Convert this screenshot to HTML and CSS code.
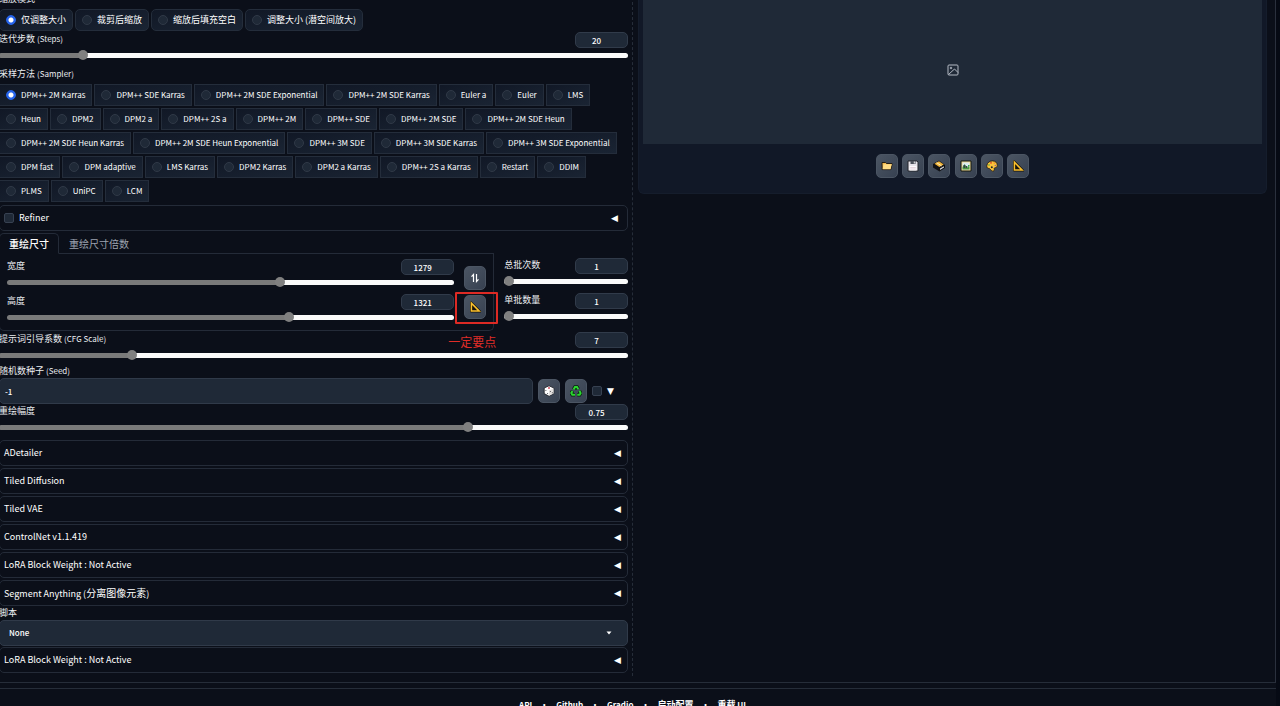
FILE: index.html
```html
<!DOCTYPE html>
<html lang="zh-CN">
<head>
<meta charset="utf-8">
<meta name="viewport" content="width=device-width, initial-scale=1">
<title>Stable Diffusion</title>
<link rel="stylesheet" href="styles.css">
</head>
<body>
<div class="app">
<main class="columns">
  <section class="settings">
    <fieldset class="group">
      <legend class="label">缩放模式</legend>
      <div class="chips rounded">
        <label class="chip"><input type="radio" name="resize" checked>仅调整大小</label>
        <label class="chip"><input type="radio" name="resize">裁剪后缩放</label>
        <label class="chip"><input type="radio" name="resize">缩放后填充空白</label>
        <label class="chip"><input type="radio" name="resize">调整大小 (潜空间放大)</label>
      </div>
    </fieldset>

    <div class="slider steps">
      <div class="slider-head"><label class="label" for="steps">迭代步数 <span class="latin">(Steps)</span></label><input class="number" type="number" value="20" aria-label="Steps"></div>
      <input class="range" id="steps" type="range" min="1" max="150" value="20" style="--fill:13%">
    </div>

    <fieldset class="group sampler">
      <legend class="label">采样方法 <span class="latin">(Sampler)</span></legend>
      <div class="chips">
        <label class="chip"><input type="radio" name="sampler" checked>DPM++ 2M Karras</label>
        <label class="chip"><input type="radio" name="sampler">DPM++ SDE Karras</label>
        <label class="chip"><input type="radio" name="sampler">DPM++ 2M SDE Exponential</label>
        <label class="chip"><input type="radio" name="sampler">DPM++ 2M SDE Karras</label>
        <label class="chip"><input type="radio" name="sampler">Euler a</label>
        <label class="chip"><input type="radio" name="sampler">Euler</label>
        <label class="chip"><input type="radio" name="sampler">LMS</label>
        <label class="chip"><input type="radio" name="sampler">Heun</label>
        <label class="chip"><input type="radio" name="sampler">DPM2</label>
        <label class="chip"><input type="radio" name="sampler">DPM2 a</label>
        <label class="chip"><input type="radio" name="sampler">DPM++ 2S a</label>
        <label class="chip"><input type="radio" name="sampler">DPM++ 2M</label>
        <label class="chip"><input type="radio" name="sampler">DPM++ SDE</label>
        <label class="chip"><input type="radio" name="sampler">DPM++ 2M SDE</label>
        <label class="chip"><input type="radio" name="sampler">DPM++ 2M SDE Heun</label>
        <label class="chip"><input type="radio" name="sampler">DPM++ 2M SDE Heun Karras</label>
        <label class="chip"><input type="radio" name="sampler">DPM++ 2M SDE Heun Exponential</label>
        <label class="chip"><input type="radio" name="sampler">DPM++ 3M SDE</label>
        <label class="chip"><input type="radio" name="sampler">DPM++ 3M SDE Karras</label>
        <label class="chip"><input type="radio" name="sampler">DPM++ 3M SDE Exponential</label>
        <label class="chip"><input type="radio" name="sampler">DPM fast</label>
        <label class="chip"><input type="radio" name="sampler">DPM adaptive</label>
        <label class="chip"><input type="radio" name="sampler">LMS Karras</label>
        <label class="chip"><input type="radio" name="sampler">DPM2 Karras</label>
        <label class="chip"><input type="radio" name="sampler">DPM2 a Karras</label>
        <label class="chip"><input type="radio" name="sampler">DPM++ 2S a Karras</label>
        <label class="chip"><input type="radio" name="sampler">Restart</label>
        <label class="chip"><input type="radio" name="sampler">DDIM</label>
        <label class="chip"><input type="radio" name="sampler">PLMS</label>
        <label class="chip"><input type="radio" name="sampler">UniPC</label>
        <label class="chip"><input type="radio" name="sampler">LCM</label>
      </div>
    </fieldset>

    <div class="accordion refiner">
      <label class="check-label"><input class="check" type="checkbox">Refiner</label>
      <span class="arrow">◀</span>
    </div>

    <div class="size-row">
      <div class="size">
        <div class="tabs" role="tablist">
          <button class="tab active" role="tab" aria-selected="true">重绘尺寸</button>
          <button class="tab" role="tab" aria-selected="false">重绘尺寸倍数</button>
        </div>
        <div class="size-box">
          <div class="sliders">
            <div class="slider">
              <div class="slider-head"><label class="label" for="width">宽度</label><input class="number" type="number" value="1279" aria-label="宽度"></div>
              <input class="range" id="width" type="range" min="64" max="2048" value="1279" style="--fill:61%">
            </div>
            <div class="slider">
              <div class="slider-head"><label class="label" for="height">高度</label><input class="number" type="number" value="1321" aria-label="高度"></div>
              <input class="range" id="height" type="range" min="64" max="2048" value="1321" style="--fill:63%">
            </div>
          </div>
          <div class="size-tools">
            <button class="tool" aria-label="交换宽高">
              <svg width="10" height="10" viewBox="0 0 10 10" fill="none" stroke="#fff" stroke-width="1.2"><path d="M3.500 9V1.500M1.500 3.700l2-2.200V5M6.500 1v7.500M8.500 6.300l-2 2.200V5"/></svg>
            </button>
            <div class="marked">
              <button class="tool" aria-label="检测图像尺寸"><svg width="12" height="12" viewBox="0 0 12 12"><path d="M2 1.200v9.300h9.200z" fill="#16130c" stroke="#16130c" stroke-width="2" stroke-linejoin="round"/><path d="M2.400 2.200v7.900h7.800z" fill="none" stroke="#fbc02d" stroke-width="1.500"/></svg></button>
              <div class="mark"></div>
              <div class="mark-note">一定要点</div>
            </div>
          </div>
        </div>
      </div>
      <div class="sliders batch">
        <div class="slider">
          <div class="slider-head"><label class="label" for="count">总批次数</label><input class="number" type="number" value="1" aria-label="总批次数"></div>
          <input class="range" id="count" type="range" min="1" max="100" value="1" style="--fill:0%">
        </div>
        <div class="slider">
          <div class="slider-head"><label class="label" for="batch">单批数量</label><input class="number" type="number" value="1" aria-label="单批数量"></div>
          <input class="range" id="batch" type="range" min="1" max="8" value="1" style="--fill:0%">
        </div>
      </div>
    </div>

    <div class="slider cfg">
      <div class="slider-head"><label class="label" for="cfg">提示词引导系数 <span class="latin">(CFG Scale)</span></label><input class="number" type="number" value="7" aria-label="CFG Scale"></div>
      <input class="range" id="cfg" type="range" min="1" max="30" step="0.5" value="7" style="--fill:21%">
    </div>

    <div class="seed">
      <label class="label" for="seed">随机数种子 <span class="latin">(Seed)</span></label>
      <div class="seed-row">
        <input class="text" id="seed" type="text" value="-1">
        <button class="tool" aria-label="随机种子">
          <svg width="12" height="12" viewBox="0 0 12 12"><path d="M6 .8 10.800 3v5.600L6 11.200 1.200 8.600V3z" fill="#fff" stroke="#17191f" stroke-width=".8"/><path d="M10.500 3.200 6 5.400v5.300l4.500-2.300z" fill="#e4e1e0"/><circle cx="6" cy="3" r=".9" fill="#c93d4e"/><g fill="#35363c"><circle cx="2.900" cy="5.500" r=".5"/><circle cx="4.600" cy="8.500" r=".5"/><circle cx="7.400" cy="6.500" r=".5"/><circle cx="9.300" cy="7.700" r=".5"/></g></svg>
        </button>
        <button class="tool" aria-label="重用种子">
          <svg width="12" height="12" viewBox="0 0 12 12" fill="none"><g stroke="#07200e" stroke-width="3.600"><path d="M3.600 4.400 5 2h2l1.300 2.200M9.400 5.800l1.200 2.300-1 1.700H7.200M5 9.800H2.300l-1-1.700 1.200-2.200"/></g><g stroke="#2bd62f" stroke-width="2"><path d="M3.600 4.400 5 2h2l1.300 2.200M9.400 5.800l1.200 2.300-1 1.700H7.200M5 9.800H2.300l-1-1.700 1.200-2.200"/></g></svg>
        </button>
        <input class="check" type="checkbox" aria-label="更多">
        <span class="arrow">▼</span>
      </div>
    </div>

    <div class="slider">
      <div class="slider-head"><label class="label" for="denoise">重绘幅度</label><input class="number" type="number" value="0.75" aria-label="重绘幅度"></div>
      <input class="range" id="denoise" type="range" min="0" max="1" step="0.01" value="0.75" style="--fill:75%">
    </div>

    <div class="accordions">
      <button class="accordion">ADetailer<span class="arrow">◀</span></button>
      <button class="accordion">Tiled Diffusion<span class="arrow">◀</span></button>
      <button class="accordion">Tiled VAE<span class="arrow">◀</span></button>
      <button class="accordion">ControlNet v1.1.419<span class="arrow">◀</span></button>
      <button class="accordion">LoRA Block Weight : Not Active<span class="arrow">◀</span></button>
      <button class="accordion"><span>Segment Anything (<span class="han">分离图像元素</span>)</span><span class="arrow">◀</span></button>
    </div>
    <div class="script">
      <label class="label" for="script">脚本</label>
      <div class="select-wrap">
        <select class="select" id="script"><option>None</option></select>
        <svg class="caret" width="6" height="4" viewBox="0 0 6 4"><path d="M.5.500h5L3 3.500z" fill="#fff"/></svg>
      </div>
    </div>
    <button class="accordion">LoRA Block Weight : Not Active<span class="arrow">◀</span></button>
  </section>

  <div class="divider"></div>

  <section class="output">
    <div class="panel">
      <div class="preview">
        <svg width="12" height="12" viewBox="0 0 12 12" fill="none" stroke="#b4bac4" stroke-width="1"><rect x="1" y="1" width="10" height="10" rx="1"/><path d="m1.500 10.500 6-5.500 3.500 3.500"/><circle cx="4" cy="4" r=".8"/></svg>
      </div>
      <div class="output-tools">
        <button class="tool" aria-label="打开文件夹"><svg width="12" height="12" viewBox="0 0 12 12"><path d="M1 2.500h3.500l1 1H11v1L9.800 9.600H1.200z" fill="#f3b84c" stroke="#17130d" stroke-width=".9" stroke-linejoin="round"/><path d="M2.500 4.300h8.300L9.500 9.200H1.700z" fill="#ffdc86"/></svg></button>
        <button class="tool" aria-label="保存"><svg width="12" height="12" viewBox="0 0 12 12"><path d="M1 1h9l1 1v9H1z" fill="#e7e3ea" stroke="#24262c"/><path d="M3.500 1h5v3h-5z" fill="#4b4f59"/><path d="M6.800 1.500h1v2h-1z" fill="#eee"/><path d="M2.500 6h7v4.500h-7z" fill="#fff"/><path d="M3.200 7.400h5.600M3.200 9h5.600" stroke="#d5b9c8" stroke-width=".7"/></svg></button>
        <button class="tool" aria-label="打包保存"><svg width="14" height="12" viewBox="0 0 14 12"><path d="m1 4 6-3.500L13 5v3l-5.500 3.500L1 7.500z" fill="#111216"/><path d="m2.500 3.800 4.500-2.500 4.700 3.300-4.300 2.300z" fill="#f0b43b"/><path d="m4.600 2.700 5 3.200" stroke="#fff2be"/><path d="m8 8.500 4-2.300v1.300L8 10z" fill="#d9dce2"/></svg></button>
        <button class="tool" aria-label="发送到图生图"><svg width="12" height="12" viewBox="0 0 12 12"><path d="M1 1h10v10H1z" fill="#f1dc98" stroke="#15180f"/><path d="M2.500 2.500h7v7h-7z" fill="#dceaf1"/><path d="m2.500 7 2.200-3L7 8l1-2 1.500 1v2.500h-7z" fill="#4d9a3f"/><path d="M3.500 5h1.800v3H3.500zM6 6h1.200v2H6z" fill="#34434a"/><path d="M8 5h1.500v1.500H8z" fill="#2da64a"/></svg></button>
        <button class="tool" aria-label="发送到重绘"><svg width="12" height="12" viewBox="0 0 12 12"><path d="M6.500.9C9.600.9 11.300 3 11.300 5.400c0 2.500-2 2-2.800 2.500-.8.6.4 1.800-.5 2.800-.9 1-2.600.1-3.200-.8C4 8.800 3.500 8.500 2.200 8.300.8 8 .7 6.600.9 5.300 1.300 2.600 3.800.9 6.500.9z" fill="#fbc43a" stroke="#21180b" stroke-width=".8"/><circle cx="5" cy="2.800" r=".9" fill="#dd3d2b"/><circle cx="8.300" cy="3" r=".8" fill="#ee842a"/><circle cx="3" cy="5" r=".8" fill="#3aa852"/><circle cx="9.300" cy="5.500" r=".7" fill="#8b55b3"/><circle cx="5.800" cy="7.300" r="1" fill="#20242d"/></svg></button>
        <button class="tool" aria-label="发送到后期处理"><svg width="12" height="12" viewBox="0 0 12 12"><path d="M2 1.200v9.300h9.200z" fill="#16130c" stroke="#16130c" stroke-width="2" stroke-linejoin="round"/><path d="M2.400 2.200v7.900h7.800z" fill="none" stroke="#fbc02d" stroke-width="1.500"/></svg></button>
      </div>
    </div>
  </section>
</main>
<footer class="footer">
  <a href="#api">API</a><span>•</span><a href="#github">Github</a><span>•</span><a href="#gradio">Gradio</a><span>•</span><a class="han" href="#startup">启动配置</a><span>•</span><a href="#reload"><span class="han">重载</span> UI</a>
</footer>
</div>
</body>
</html>
```
FILE: styles.css
```css
* { box-sizing: border-box; }

body {
  margin: 0;
  overflow: hidden;
  background: #060a14;
  color: #fff;
  font: 500 9px/14px "Noto Sans CJK SC", sans-serif;
}

input, button, select {
  margin: 0;
  color: inherit;
  font: inherit;
}

/* The page sits slightly scrolled past its top-left corner. */
.app {
  margin: -8px 4px 0 -1px;
  background: #0b0f19;
}

.columns {
  display: grid;
  grid-template-columns: minmax(0, 1fr) 10px minmax(0, 1fr);
  padding: 0 8px 6px 0;
  border-right: 1px solid #2a303d;
  border-bottom: 1px solid #262d39;
}

.divider {
  width: 1px;
  margin-left: 4px;
  border-left: 1px dashed #262d39;
}

.settings {
  display: flex;
  flex-direction: column;
  padding-bottom: 3px;
}

.group {
  min-width: 0;
  margin: 0;
  padding: 0;
  border: 0;
}

.label {
  display: block;
  padding: 0;
  color: #eceef1;
  font-weight: 400;
  line-height: 14px;
  white-space: nowrap;
}

.latin { font-size: 8px; }

/* Radio chips */
.chips {
  display: flex;
  flex-wrap: wrap;
  gap: 2px;
  padding-top: 3px;
}

.chip {
  display: flex;
  align-items: center;
  gap: 5px;
  height: 22px;
  padding: 0 6px;
  border: 1px solid #242d3b;
  background: linear-gradient(to bottom right, #111826, #1a2433);
  font-size: 8px;
  font-weight: 400;
  white-space: nowrap;
}

.rounded .chip {
  border-radius: 5px;
  font-size: 9px;
}

.chip input {
  appearance: none;
  width: 10px;
  height: 10px;
  border: 1px solid #303947;
  border-radius: 50%;
  background: #1f2937;
}

.chip input:checked {
  border-color: #2563eb;
  background: radial-gradient(circle, #fff 0 2px, #2563eb 3px);
}

/* Sliders */
.slider-head {
  display: flex;
  justify-content: space-between;
  height: 16px;
}

.number {
  appearance: textfield;
  width: 53px;
  height: 16px;
  padding: 0 10px 0 0;
  border: 1px solid #313b4a;
  border-radius: 5px;
  background: #1f2937;
  font-size: 8px;
  text-align: center;
}

.number::-webkit-inner-spin-button { appearance: none; }

.range {
  appearance: none;
  display: block;
  width: 100%;
  height: 14px;
  background: transparent;
}

.range::-webkit-slider-runnable-track {
  height: 5px;
  border-radius: 3px;
  background: linear-gradient(to right, #7a7a7a var(--fill), #fafafa var(--fill));
}

.range::-webkit-slider-thumb {
  appearance: none;
  width: 10px;
  height: 10px;
  margin-top: -3px;
  border-radius: 50%;
  background: #808080;
}

.steps { margin-top: 1px; }
.sampler { margin-top: 5px; }

/* Accordions */
.accordion {
  display: flex;
  align-items: center;
  justify-content: space-between;
  width: 100%;
  height: 26px;
  padding: 0 6px 0 4px;
  border: 1px solid #242b38;
  border-radius: 5px;
  background: transparent;
  font-size: 9px;
  font-weight: 400;
  text-align: left;
}

.accordion .han { font-size: 10px; }

.accordions {
  display: grid;
  gap: 2px;
  margin: 6px 0 0;
}

.refiner {
  margin-top: 3px;
  padding-right: 9px;
}

.check-label {
  display: flex;
  align-items: center;
  gap: 5px;
}

.check {
  appearance: none;
  width: 10px;
  height: 10px;
  border: 1px solid #374151;
  border-radius: 2px;
  background: #1f2937;
}

.arrow {
  color: #fff;
  font: 9px/12px "DejaVu Sans", sans-serif;
}

/* Size and batch */
.size-row {
  display: flex;
  gap: 10px;
  margin-top: 2px;
}

.size { flex: 4; }

.tabs {
  display: flex;
  height: 21px;
  border-bottom: 1px solid #242b38;
}

.tab {
  height: 21px;
  padding: 0 10px;
  border: 0;
  background: transparent;
  color: #9ca3af;
  font-size: 10px;
  font-weight: 400;
}

.tab.active {
  padding: 0 9px;
  border: 1px solid #242b38;
  border-bottom-color: #0b0f19;
  border-radius: 5px 5px 0 0;
  background: #0b0f19;
  color: #fff;
  font-weight: 500;
}

.size-box {
  display: flex;
  gap: 10px;
  padding: 5px 7px 6px;
  border: 1px solid #242b38;
  border-top: 0;
  border-radius: 0 0 5px 5px;
}

.sliders {
  display: grid;
  flex: 1;
  align-content: start;
  gap: 5px;
}

.batch { padding-top: 25px; }

.size-tools {
  display: grid;
  align-content: start;
  gap: 5px;
  padding-top: 7px;
}

.tool {
  display: grid;
  place-items: center;
  width: 22px;
  height: 24px;
  padding: 0;
  border: 1px solid #4b5563;
  border-radius: 5px;
  background: linear-gradient(to bottom right, #4b5563, #374151);
}

.marked { position: relative; }

.mark {
  position: absolute;
  inset: -3px -12px -5px -9px;
  border: 2px solid #dd2a24;
  border-radius: 1px;
}

.mark-note {
  position: absolute;
  top: 38px;
  right: -10px;
  color: #e02d28;
  font: 400 12px/18px "Noto Sans CJK SC", sans-serif;
  white-space: nowrap;
}

.cfg { margin-top: 1px; }

/* Seed */
.seed { margin-top: 2px; }

.seed-row {
  display: flex;
  align-items: center;
  gap: 5px;
  padding-right: 14px;
}

.text {
  flex: 1;
  min-width: 0;
  height: 26px;
  padding: 0 5px;
  border: 1px solid #303a49;
  border-radius: 5px;
  background: #1f2937;
  font-size: 8px;
}

/* Script */
.script { margin-bottom: 1px; }

.select-wrap {
  display: grid;
  align-items: center;
}

.select {
  grid-area: 1 / 1;
  appearance: none;
  width: 100%;
  height: 26px;
  padding: 0 9px;
  border: 1px solid #303a49;
  border-radius: 5px;
  background: #1f2937;
  font-size: 8px;
}

.caret {
  grid-area: 1 / 1;
  justify-self: end;
  margin-right: 16px;
  pointer-events: none;
}

/* Output */
.panel {
  padding: 0 4px 15px;
  border: 1px solid #151d2c;
  border-top: 0;
  border-radius: 0 0 6px 6px;
  background: #111827;
}

.preview {
  display: grid;
  place-items: center;
  height: 152px;
  padding-top: 4px;
  background: #1f2937;
}

.output-tools {
  display: flex;
  justify-content: space-between;
  width: 154px;
  margin: 10px auto 0;
}

.footer {
  display: flex;
  justify-content: center;
  gap: 8px;
  margin-top: 5px;
  padding: 9px 10px 9px 0;
  border-top: 1px solid #262d39;
  font-size: 8px;
  font-weight: 700;
}

.footer .han { font-size: 9px; }

.footer a {
  color: inherit;
  text-decoration: none;
}
```
